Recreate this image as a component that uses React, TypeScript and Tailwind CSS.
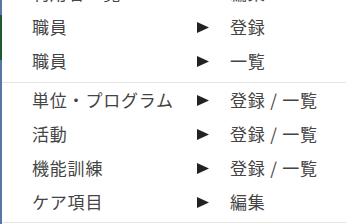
import React from 'react';

// Dropdown menu: label ▶ action rows, grouped with thin dividers.
const groups: { label: string; action: string }[][] = [
  [
    { label: '利用者一覧', action: '編集' },
    { label: '職員', action: '登録' },
    { label: '職員', action: '一覧' },
  ],
  [
    { label: '単位・プログラム', action: '登録 / 一覧' },
    { label: '活動', action: '登録 / 一覧' },
    { label: '機能訓練', action: '登録 / 一覧' },
    { label: 'ケア項目', action: '編集' },
  ],
];

function Arrow() {
  return (
    <svg width="12" height="11" viewBox="0 0 12 11" className="block">
      <path d="M0 0 L12 5.5 L0 11 Z" fill="#222" />
    </svg>
  );
}

export default function App() {
  return (
    <div
      className="flex h-[224px] w-[346px] overflow-hidden bg-white text-[#444]"
      style={{ fontFamily: '"Noto Sans CJK JP", "Noto Sans", sans-serif' }}
    >
      {/* edge of the sidebar behind the menu */}
      <div className="flex w-[2px] shrink-0 flex-col">
        <div className="h-[15px] bg-[#5479a8]" />
        <div className="h-[45px] bg-[#1d5a2e]" />
        <div className="flex-1 bg-[#5479a8]" />
      </div>

      <div className="-mt-6 flex-1">
        {groups.map((g, gi) => (
          <ul
            key={gi}
            className={
              gi === 0
                ? 'border-b border-[#e4e4e4] pb-1'
                : 'border-b border-[#e4e4e4] pb-[3px]'
            }
          >
            {g.map((row, i) => (
              <li
                key={i}
                className="flex h-[34px] items-center text-[17px] tracking-[0.8px]"
              >
                <span className="w-[195px] pl-[30px]">{row.label}</span>
                <Arrow />
                <span className="pl-[21px]">{row.action}</span>
              </li>
            ))}
          </ul>
        ))}
      </div>
    </div>
  );
}
